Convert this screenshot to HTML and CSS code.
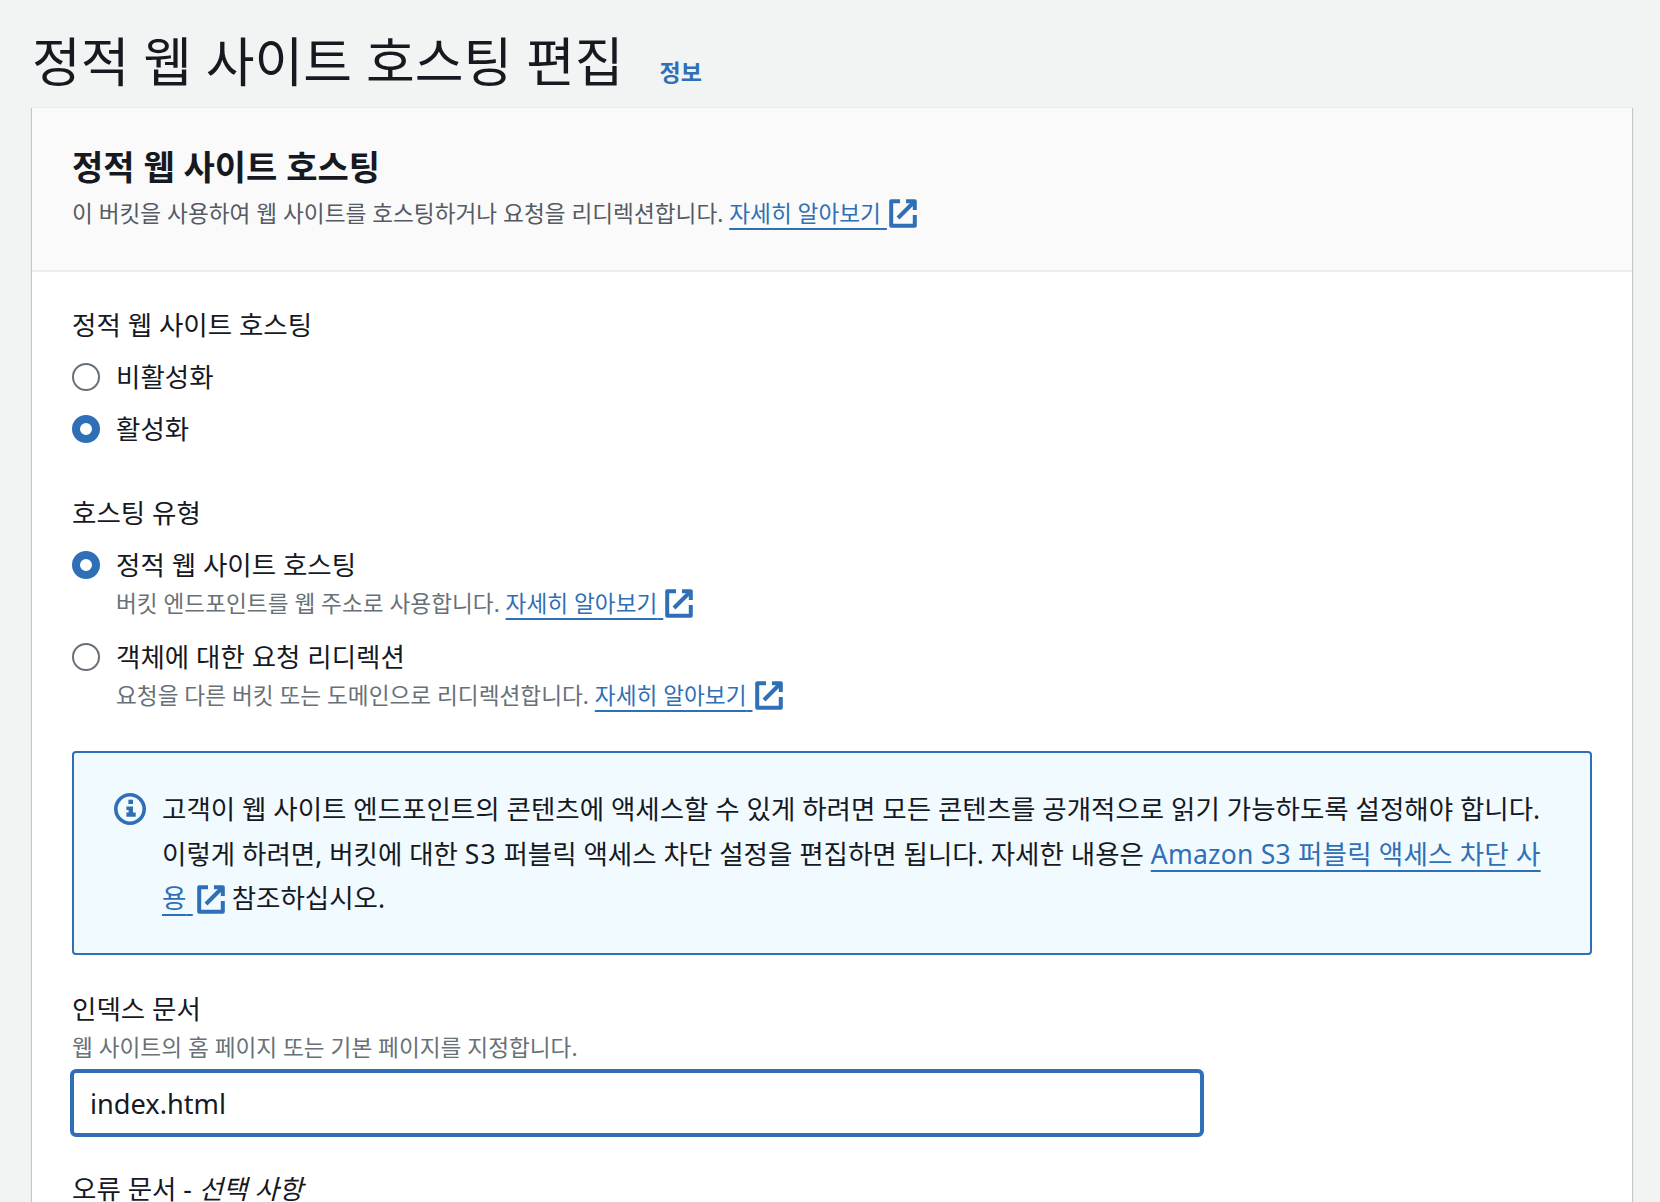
FILE: index.html
```html
<!DOCTYPE html>
<html lang="ko">
<head>
<meta charset="utf-8">
<title>정적 웹 사이트 호스팅 편집</title>
<link rel="stylesheet" href="styles.css">
</head>
<body>
<svg class="sprites" width="0" height="0" aria-hidden="true">
  <symbol id="ext" viewBox="0 0 28 29">
    <path d="M11 2.2H2.2v24.6h23.6V16" fill="none" stroke="currentColor" stroke-width="4" stroke-linejoin="round"/>
    <path d="M17 2.2h8.8V11" fill="none" stroke="currentColor" stroke-width="4" stroke-linejoin="round"/>
    <path d="M24.5 3.5 9 19" fill="none" stroke="currentColor" stroke-width="4"/>
  </symbol>
</svg>
<main class="page">
  <header class="page-head">
    <h1>정적 웹 사이트 호스팅 편집</h1>
    <a class="info" href="#">정보</a>
  </header>
  <section class="card">
    <div class="card-head">
      <h2>정적 웹 사이트 호스팅</h2>
      <p class="card-desc">이 버킷을 사용하여 웹 사이트를 호스팅하거나 요청을 리디렉션합니다. <a class="link" href="#">자세히 알아보기<span class="gap"> </span></a><svg class="ext"><use href="#ext"/></svg></p>
    </div>
    <div class="card-body">
      <div class="field-a">
        <div class="label">정적 웹 사이트 호스팅</div>
        <div class="radios">
          <div class="radio"><span class="dot"></span><span class="r-text">비활성화</span></div>
          <div class="radio"><span class="dot on"></span><span class="r-text">활성화</span></div>
        </div>
      </div>
      <div class="field-b">
        <div class="label">호스팅 유형</div>
        <div class="radio first"><span class="dot on"></span><span class="r-text">정적 웹 사이트 호스팅</span></div>
        <p class="r-desc">버킷 엔드포인트를 웹 주소로 사용합니다. <a class="link" href="#">자세히 알아보기<span class="gap"> </span></a><svg class="ext"><use href="#ext"/></svg></p>
        <div class="radio"><span class="dot"></span><span class="r-text">객체에 대한 요청 리디렉션</span></div>
        <p class="r-desc">요청을 다른 버킷 또는 도메인으로 리디렉션합니다. <a class="link" href="#">자세히 알아보기<span class="gap"> </span></a><svg class="ext"><use href="#ext"/></svg></p>
      </div>
      <div class="alert">
        <svg class="alert-icon" viewBox="0 0 32 32" aria-hidden="true">
          <circle cx="16" cy="16" r="14.2" fill="none" stroke="currentColor" stroke-width="3.6"/>
          <rect x="14.4" y="6.7" width="4.6" height="4.3" fill="currentColor"/>
          <path d="M12.4 13.6H19v5.8h2.7v4.3h-9.3v-4.3h2.2V17h-2.2z" fill="currentColor"/>
        </svg>
        <p class="alert-text">고객이 웹 사이트 엔드포인트의 콘텐츠에 액세스할 수 있게 하려면 모든 콘텐츠를 공개적으로 읽기 가능하도록 설정해야 합니다.<br>이렇게 하려면, 버킷에 대한 <span class="s3">S3</span> 퍼블릭 액세스 차단 설정을 편집하면 됩니다. 자세한 내용은 <a class="link wide" href="#">Amazon S3 퍼블릭 액세스 차단 사<br>용<span class="gap"> </span></a><svg class="ext"><use href="#ext"/></svg> 참조하십시오.</p>
      </div>
      <div class="field-c">
        <div class="label">인덱스 문서</div>
        <p class="hint">웹 사이트의 홈 페이지 또는 기본 페이지를 지정합니다.</p>
        <input class="input" type="text" value="index.html">
      </div>
      <div class="label last">오류 문서 - <i>선택 사항</i></div>
    </div>
  </section>
</main>
</body>
</html>
```
FILE: styles.css
```css
* { box-sizing: border-box; }
html, body { margin: 0; height: 1202px; overflow: hidden; }
body {
  background: #f2f3f3;
  color: #16191f;
  font-family: "Noto Sans", "Noto Sans CJK KR", sans-serif;
}
.sprites { position: absolute; }
.page { padding: 0 28px 0 32px; }
.page-head { display: flex; align-items: flex-end; height: 107px; }
h1 { margin: 0 0 10px; font-size: 53px; font-weight: 400; line-height: 70px; color: #16191f; }
.info { margin: 0 0 19px 36px; font-size: 23px; font-weight: 700; line-height: 32px; color: #2f6fb5; text-decoration: none; }
.card {
  background: #fff;
  border-top: 1px solid #eaeded;
  box-shadow: 0 1px 1px 0 rgba(0, 28, 36, .3), 1px 1px 1px 0 rgba(0, 28, 36, .15), -1px 1px 1px 0 rgba(0, 28, 36, .15);
  height: 1200px;
}
.card-head { height: 164px; padding: 37px 40px 0; background: #fafafa; border-bottom: 2px solid #eaeded; }
h2 { margin: 0; font-size: 34px; font-weight: 700; line-height: 44px; }
.card-desc { margin: 7px 0 0; font-size: 22.65px; line-height: 34px; color: #545b64; white-space: nowrap; }
.link {
  color: #2f6fb5;
  text-decoration: underline 2px #2f6fb5;
  text-underline-offset: 6px;
  text-decoration-skip-ink: none;
}
.wide { letter-spacing: .22px; }
.s3 { letter-spacing: 1px; }
.gap { font-size: 23px; }
.ext { display: inline-block; width: 28px; height: 29px; margin-left: 2px; color: #2f6fb5; vertical-align: -6px; }
.alert-text .ext { margin-left: 4px; }
.card-body { padding: 34px 40px 0; }
.label { font-size: 26.5px; line-height: 38px; color: #16191f; }
.radios { margin-top: 14px; display: flex; flex-direction: column; gap: 14px; }
.radio { display: flex; align-items: center; gap: 16px; height: 38px; font-size: 26.5px; }
.r-text { line-height: 38px; }
.dot { flex: none; width: 28px; height: 28px; border-radius: 50%; border: 2.7px solid #687078; background: #fff; }
.dot.on { border: 8px solid #2f6fb5; }
.field-b { margin-top: 46px; }
.radio.first { margin-top: 14px; }
.r-desc { margin: 0 0 14px 44px; height: 40px; font-size: 22.65px; line-height: 38px; color: #687078; white-space: nowrap; }
.alert {
  display: flex; gap: 16px;
  margin: 35px 0 0; width: 1520px; height: 204px;
  padding: 34px 40px 0;
  background: #f1faff;
  border: 2px solid #2f6fb5;
  border-radius: 4px;
}
.alert-icon { flex: none; width: 32px; height: 32px; margin-top: 6px; color: #2f6fb5; }
.alert-text { margin: 0; font-size: 26.5px; line-height: 44.5px; white-space: nowrap; color: #16191f; }
.field-c { margin-top: 35px; }
.hint { margin: 1px 0 0; font-size: 22.65px; line-height: 38px; color: #687078; }
.input {
  display: block;
  width: 1134px; height: 68px; margin: 2px 0 0 -2px;
  padding: 0 16px;
  border: 4px solid #2f6fb5; border-radius: 6px;
  font: 400 27.2px "Noto Sans", sans-serif; color: #16191f; outline: none;
}
.last { margin-top: 33px; }
```
